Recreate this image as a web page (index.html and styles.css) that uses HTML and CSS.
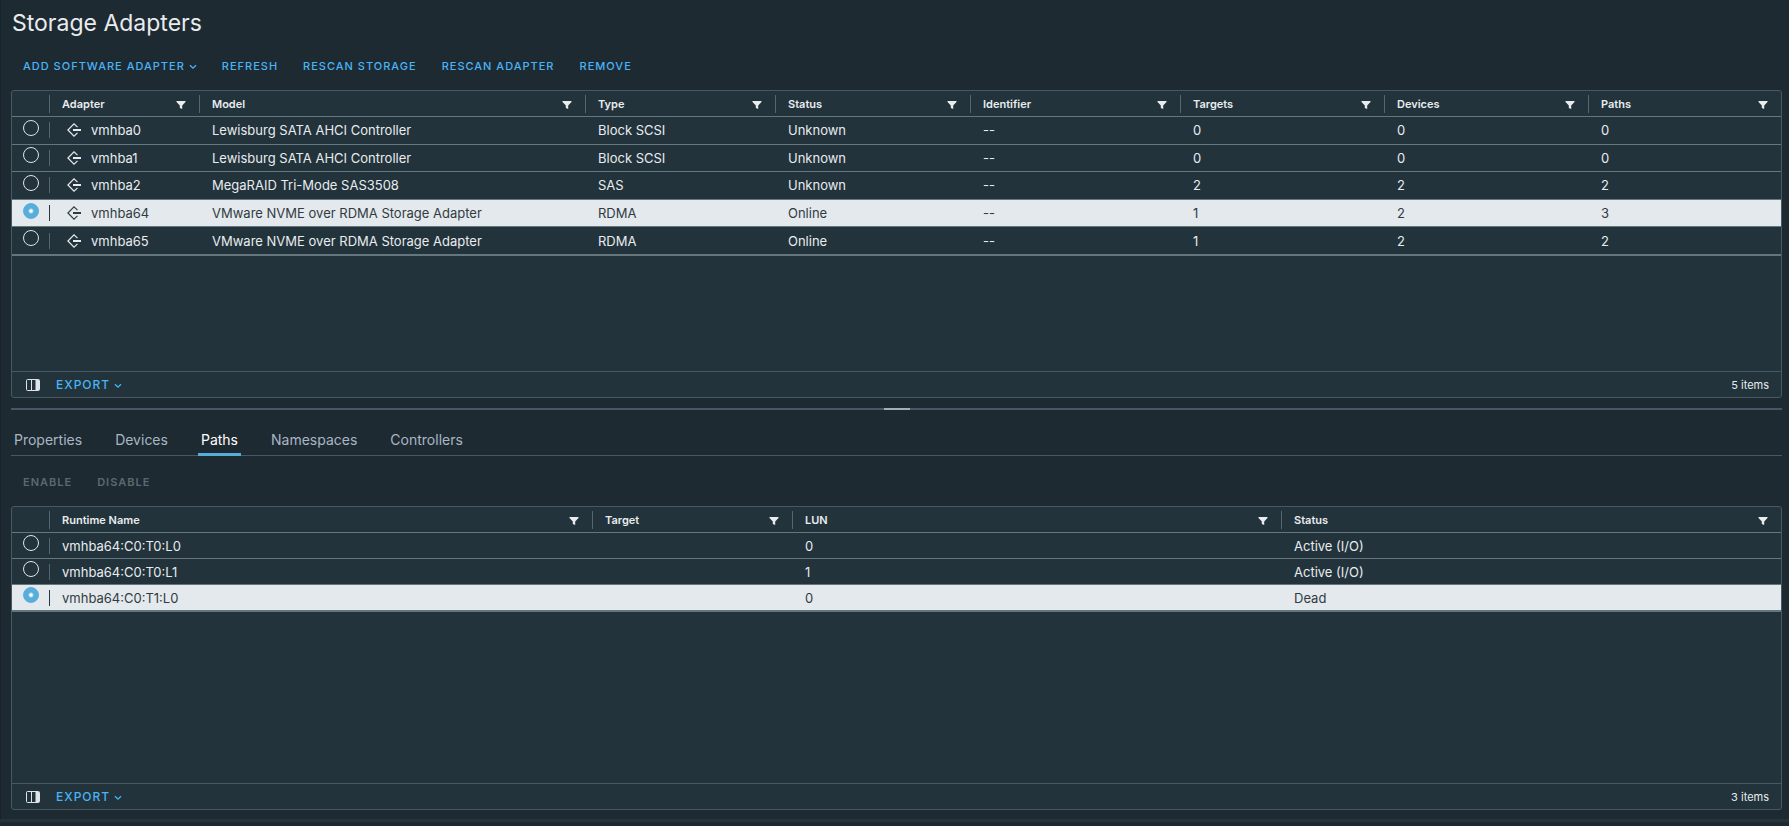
FILE: index.html
```html
<!DOCTYPE html>
<html lang="en">

<head>
  <meta charset="UTF-8" />
  <meta name="viewport" content="width=device-width, initial-scale=1.0" />
  <title>Storage Adapters</title>
  <link rel="stylesheet" href="styles.css">
</head>

<body>
  <!-- shared icons -->
  <svg class="sprite" aria-hidden="true">
    <symbol id="icon-filter" viewBox="0 0 10 8">
      <path d="M0.5 0h9v1L6.2 4.4V8L3.8 7V4.4L0.5 1z" fill="currentColor" />
    </symbol>
    <symbol id="icon-caret" viewBox="0 0 8 6">
      <path d="M1 1.2l3 3 3-3" fill="none" stroke="currentColor" stroke-width="1.3" />
    </symbol>
    <symbol id="icon-adapter" viewBox="0 0 14 14">
      <path d="M10.5 4.1L7 0.9 0.9 7 7 13.1l3.5-3.2" fill="none" stroke="currentColor" stroke-width="1.2" />
      <path d="M6 6h8v2H6z" fill="currentColor" />
    </symbol>
    <symbol id="icon-columns" viewBox="0 0 14 12">
      <rect x="0.5" y="0.5" width="13" height="11" rx="1" fill="none" stroke="currentColor" />
      <path d="M5.5 1v10" stroke="currentColor" />
      <path d="M9.5 1H13v10H9.5z" fill="currentColor" />
    </symbol>
  </svg>

  <main class="page">
    <h1>Storage Adapters</h1>

    <div class="toolbar">
      <button type="button">Add software adapter<svg class="caret"><use href="#icon-caret" /></svg></button>
      <button type="button">Refresh</button>
      <button type="button">Rescan storage</button>
      <button type="button">Rescan adapter</button>
      <button type="button">Remove</button>
    </div>

    <section class="panel panel-adapters">
      <div class="panel-body">
        <table class="adapters">
          <colgroup>
            <col class="col-radio">
            <col class="col-adapter">
            <col>
            <col class="col-type">
            <col class="col-status">
            <col class="col-identifier">
            <col class="col-count">
            <col class="col-count">
            <col class="col-paths">
          </colgroup>
          <thead>
            <tr>
              <th></th>
              <th><div class="head">Adapter<svg class="filter"><use href="#icon-filter" /></svg></div></th>
              <th><div class="head">Model<svg class="filter"><use href="#icon-filter" /></svg></div></th>
              <th><div class="head">Type<svg class="filter"><use href="#icon-filter" /></svg></div></th>
              <th><div class="head">Status<svg class="filter"><use href="#icon-filter" /></svg></div></th>
              <th><div class="head">Identifier<svg class="filter"><use href="#icon-filter" /></svg></div></th>
              <th><div class="head">Targets<svg class="filter"><use href="#icon-filter" /></svg></div></th>
              <th><div class="head">Devices<svg class="filter"><use href="#icon-filter" /></svg></div></th>
              <th><div class="head">Paths<svg class="filter"><use href="#icon-filter" /></svg></div></th>
            </tr>
          </thead>
          <tbody>
            <tr>
              <td><input type="radio" name="adapter" id="vmhba0"></td>
              <td><label class="adapter-name" for="vmhba0"><svg><use href="#icon-adapter" /></svg>vmhba0</label></td>
              <td>Lewisburg SATA AHCI Controller</td>
              <td>Block SCSI</td>
              <td>Unknown</td>
              <td>--</td>
              <td>0</td>
              <td>0</td>
              <td>0</td>
            </tr>
            <tr>
              <td><input type="radio" name="adapter" id="vmhba1"></td>
              <td><label class="adapter-name" for="vmhba1"><svg><use href="#icon-adapter" /></svg>vmhba1</label></td>
              <td>Lewisburg SATA AHCI Controller</td>
              <td>Block SCSI</td>
              <td>Unknown</td>
              <td>--</td>
              <td>0</td>
              <td>0</td>
              <td>0</td>
            </tr>
            <tr>
              <td><input type="radio" name="adapter" id="vmhba2"></td>
              <td><label class="adapter-name" for="vmhba2"><svg><use href="#icon-adapter" /></svg>vmhba2</label></td>
              <td>MegaRAID Tri-Mode SAS3508</td>
              <td>SAS</td>
              <td>Unknown</td>
              <td>--</td>
              <td>2</td>
              <td>2</td>
              <td>2</td>
            </tr>
            <tr class="selected">
              <td><input type="radio" name="adapter" id="vmhba64" checked></td>
              <td><label class="adapter-name" for="vmhba64"><svg><use href="#icon-adapter" /></svg>vmhba64</label></td>
              <td>VMware NVME over RDMA Storage Adapter</td>
              <td>RDMA</td>
              <td>Online</td>
              <td>--</td>
              <td>1</td>
              <td>2</td>
              <td>3</td>
            </tr>
            <tr>
              <td><input type="radio" name="adapter" id="vmhba65"></td>
              <td><label class="adapter-name" for="vmhba65"><svg><use href="#icon-adapter" /></svg>vmhba65</label></td>
              <td>VMware NVME over RDMA Storage Adapter</td>
              <td>RDMA</td>
              <td>Online</td>
              <td>--</td>
              <td>1</td>
              <td>2</td>
              <td>2</td>
            </tr>
          </tbody>
        </table>
      </div>
      <footer class="panel-footer">
        <button type="button" class="columns" aria-label="Manage columns"><svg><use href="#icon-columns" /></svg></button>
        <button type="button" class="export">Export<svg class="caret"><use href="#icon-caret" /></svg></button>
        <span class="count">5 items</span>
      </footer>
    </section>

    <div class="splitter"><span class="handle"></span></div>

    <nav class="tabs">
      <a href="#properties">Properties</a>
      <a href="#devices">Devices</a>
      <a href="#paths" class="active">Paths</a>
      <a href="#namespaces">Namespaces</a>
      <a href="#controllers">Controllers</a>
    </nav>

    <div class="toolbar toolbar-paths">
      <button type="button" disabled>Enable</button>
      <button type="button" disabled>Disable</button>
    </div>

    <section class="panel panel-paths" id="paths">
      <div class="panel-body">
        <table class="paths">
          <colgroup>
            <col class="col-radio">
            <col class="col-runtime">
            <col class="col-target">
            <col class="col-lun">
            <col>
          </colgroup>
          <thead>
            <tr>
              <th></th>
              <th><div class="head">Runtime Name<svg class="filter"><use href="#icon-filter" /></svg></div></th>
              <th><div class="head">Target<svg class="filter"><use href="#icon-filter" /></svg></div></th>
              <th><div class="head">LUN<svg class="filter"><use href="#icon-filter" /></svg></div></th>
              <th><div class="head">Status<svg class="filter"><use href="#icon-filter" /></svg></div></th>
            </tr>
          </thead>
          <tbody>
            <tr>
              <td><input type="radio" name="path" id="path0"></td>
              <td><label for="path0">vmhba64:C0:T0:L0</label></td>
              <td></td>
              <td>0</td>
              <td>Active (I/O)</td>
            </tr>
            <tr>
              <td><input type="radio" name="path" id="path1"></td>
              <td><label for="path1">vmhba64:C0:T0:L1</label></td>
              <td></td>
              <td>1</td>
              <td>Active (I/O)</td>
            </tr>
            <tr class="selected">
              <td><input type="radio" name="path" id="path2" checked></td>
              <td><label for="path2">vmhba64:C0:T1:L0</label></td>
              <td></td>
              <td>0</td>
              <td>Dead</td>
            </tr>
          </tbody>
        </table>
      </div>
      <footer class="panel-footer">
        <button type="button" class="columns" aria-label="Manage columns"><svg><use href="#icon-columns" /></svg></button>
        <button type="button" class="export">Export<svg class="caret"><use href="#icon-caret" /></svg></button>
        <span class="count">3 items</span>
      </footer>
    </section>
  </main>
  <div class="bottom-bar"></div>
</body>

</html>
```
FILE: styles.css
```css
* {
  box-sizing: border-box;
}

body {
  background: #1e2a32;
  color: #e9ecef;
  display: flex;
  flex-direction: column;
  font-family: Inter, "Liberation Sans", sans-serif;
  font-size: 13px;
  line-height: 16px;
  margin: 0;
  min-height: 100vh;
}

.sprite {
  display: none;
}

.page {
  border-left: 1px solid #17222a;
  display: flex;
  flex: 1;
  flex-direction: column;
  padding: 8px 7px 9px 10px;
}

h1 {
  font-size: 23px;
  font-weight: 400;
  line-height: 30px;
  margin: 0 1px;
}

button {
  background: none;
  border: none;
  color: #49b4f6;
  cursor: pointer;
  font-family: inherit;
  font-size: 11px;
  font-weight: 500;
  letter-spacing: 1px;
  line-height: 16px;
  padding: 0;
  text-transform: uppercase;
}

button:disabled {
  color: #5c686f;
  cursor: default;
  font-weight: 600;
}

.caret {
  height: 6px;
  margin-left: 4px;
  width: 8px;
}

.toolbar {
  display: flex;
  gap: 25px;
  margin: 20px 12px 16px;
}

.toolbar-paths {
  margin: 18px 12px 16px;
}

.panel {
  background: #22333b;
  border: 1px solid #485964;
  border-radius: 3px;
  display: flex;
  flex-direction: column;
}

.panel-adapters {
  min-height: 308px;
}

.panel-paths {
  flex: 1;
}

.panel-body {
  flex: 1;
}

table {
  border-collapse: separate;
  border-spacing: 0;
  table-layout: fixed;
  width: 100%;
}

.col-radio {
  width: 37px;
}

.col-adapter {
  width: 150px;
}

.col-type {
  width: 190px;
}

.col-status {
  width: 195px;
}

.col-identifier {
  width: 210px;
}

.col-count {
  width: 204px;
}

.col-paths {
  width: 193px;
}

.col-runtime {
  width: 543px;
}

.col-target {
  width: 200px;
}

.col-lun {
  width: 489px;
}

th,
td {
  border-bottom: 1px solid #66767d;
  height: 26px;
  padding: 0 13px;
  text-align: left;
  white-space: nowrap;
}

th {
  font-size: 11px;
  font-weight: 600;
}

/* short divider on the left edge of a cell */
th + th,
td:nth-child(2) {
  background: linear-gradient(#56666f, #56666f) no-repeat left center / 1px 18px;
}

td:nth-child(2) {
  background-size: 1px 16px;
}

.adapters tbody {
  height: 139px;
}

tbody tr:last-child td {
  border-bottom-width: 2px;
  height: 27px;
}

.head {
  align-items: center;
  display: flex;
  justify-content: space-between;
}

.filter {
  height: 8px;
  margin-top: 3px;
  width: 10px;
}

.selected {
  background: #e4e9ed;
  color: #313b42;
}

.selected td:nth-child(2) {
  background-image: linear-gradient(#2b363d, #2b363d);
}

td:first-child {
  padding: 0 11px;
}

input[type="radio"] {
  appearance: none;
  border: 1px solid #dfe4e8;
  border-radius: 50%;
  display: block;
  height: 16px;
  margin: 0 0 5px;
  width: 16px;
}

input[type="radio"]:checked {
  background: radial-gradient(circle, #ffffff 1px, #58aedb 3px);
  border-color: #58aedb;
}

.adapter-name {
  align-items: center;
  display: flex;
  gap: 10px;
  padding-left: 5px;
}

.adapter-name svg {
  height: 14px;
  width: 14px;
}

.panel-footer {
  align-items: center;
  border-top: 1px solid #485964;
  display: flex;
  height: 26px;
  padding: 0 12px 0 14px;
}

.columns {
  color: #dfe4e8;
  display: flex;
}

.columns svg {
  height: 12px;
  width: 14px;
}

.export {
  font-size: 12px;
  margin-left: 16px;
}

.count {
  font-size: 11px;
  margin-left: auto;
}

.splitter {
  background: #485766;
  display: flex;
  height: 2px;
  justify-content: center;
  margin-top: 10px;
}

.handle {
  background: #a3afb8;
  width: 26px;
}

.tabs {
  border-bottom: 1px solid #485764;
  display: flex;
  gap: 27px;
  margin-top: 18px;
}

.tabs a {
  border-bottom: 3px solid transparent;
  color: #a9b6c4;
  font-size: 14px;
  line-height: 24px;
  margin-bottom: -1px;
  padding: 0 3px 1px;
  text-decoration: none;
}

.tabs .active {
  border-bottom-color: #58aedb;
  color: #ffffff;
}

.bottom-bar {
  background: #26333d;
  height: 3px;
  margin-bottom: 4px;
}
```
